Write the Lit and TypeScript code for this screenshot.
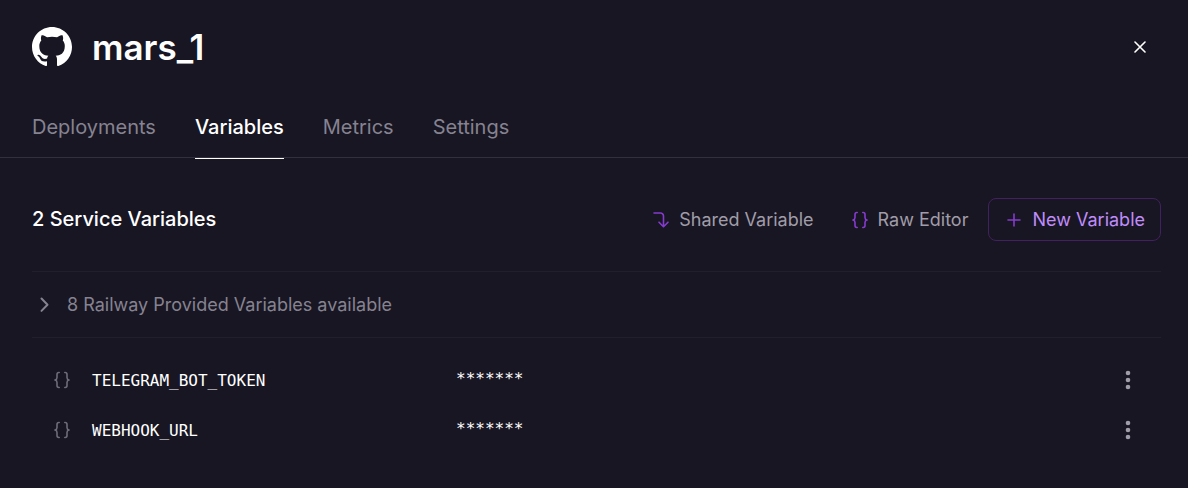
import { LitElement, html, css, svg } from "lit";
import { customElement, state } from "lit/decorators.js";

const braces = svg`
  <path d="M7.200 2.500h-.4c-1.200 0-1.800.7-1.800 1.900v3.100c0 1.400-.7 2.200-2 2.500 1.300.3 2 1.100 2 2.500v3.100c0 1.200.6 1.900 1.800 1.900h.4" />
  <path d="M12.800 2.500h.4c1.200 0 1.800.7 1.800 1.900v3.100c0 1.400.7 2.200 2 2.500-1.300.3-2 1.100-2 2.500v3.100c0 1.200-.6 1.900-1.800 1.900h-.4" />
`;

interface Variable {
  name: string;
  value: string;
}

@customElement("app-root")
export class AppRoot extends LitElement {
  static styles = css`
    :host {
      display: block;
      min-height: 100vh;
      background: #181622;
      color: #ffffff;
      font-family: Inter, sans-serif;
    }
    button {
      font: inherit;
      color: inherit;
      background: none;
      border: 0;
      margin: 0;
      padding: 0;
      cursor: pointer;
    }
    svg {
      display: block;
      flex: none;
    }
    .line-icon {
      fill: none;
      stroke: currentColor;
      stroke-linecap: round;
      stroke-linejoin: round;
      stroke-width: 1.6;
    }
    .header {
      display: flex;
      align-items: center;
      gap: 20px;
      padding: 24px 32px 0;
    }
    .title {
      flex: 1;
      margin: 0;
      font-size: 35px;
      line-height: 46px;
      font-weight: 600;
    }
    .close {
      display: grid;
      place-items: center;
      width: 32px;
      height: 32px;
    }
    .tabs {
      display: flex;
      gap: 39px;
      margin-top: 34px;
      padding: 0 32px;
      border-bottom: 1px solid #33303e;
    }
    .tab {
      color: #868391;
      text-decoration: none;
      font-size: 20px;
      line-height: 46px;
      padding-bottom: 8px;
      border-bottom: 1px solid transparent;
      margin-bottom: -2px;
    }
    .tab.active {
      color: #ffffff;
      font-weight: 500;
      border-color: #ffffff;
    }
    .content {
      padding: 40px 27px 32px 32px;
    }
    .toolbar {
      display: flex;
      align-items: center;
      justify-content: space-between;
      padding-bottom: 30px;
    }
    .heading {
      margin: 0;
      padding-bottom: 2px;
      font-size: 20px;
      line-height: 28px;
      font-weight: 500;
    }
    .actions {
      display: flex;
      gap: 4px;
    }
    .action {
      display: flex;
      align-items: center;
      gap: 8px;
      height: 43px;
      padding: 0 15px;
      border: 1px solid transparent;
      border-radius: 8px;
      font-size: 18px;
      color: #a09da9;
      white-space: nowrap;
    }
    .action svg {
      color: #853bce;
    }
    .action.primary {
      border-color: #41215f;
      color: #c08cfb;
    }
    .provided {
      display: flex;
      align-items: center;
      gap: 13px;
      width: 100%;
      height: 67px;
      padding-left: 2px;
      border-top: 1px solid #211f2b;
      border-bottom: 1px solid #211f2b;
      font-size: 18px;
      color: #868391;
    }
    .variables {
      list-style: none;
      margin: 0;
      padding: 17px 0 0;
    }
    .variable {
      display: grid;
      grid-template-columns: 40px 364px 1fr 26px;
      align-items: center;
      height: 50px;
      padding: 0 20px;
      font-family: "DejaVu Sans Mono", monospace;
      font-size: 16px;
    }
    .variable svg {
      color: #6f6c7a;
    }
    .value {
      padding-bottom: 4px;
    }
    .more {
      display: grid;
      place-items: center;
      height: 32px;
    }
    .more svg {
      fill: #a09da9;
    }
  `;

  @state() private activeTab = "Variables";

  private tabs = ["Deployments", "Variables", "Metrics", "Settings"];

  private variables: Variable[] = [
    { name: "TELEGRAM_BOT_TOKEN", value: "*******" },
    { name: "WEBHOOK_URL", value: "*******" },
  ];

  private selectTab(event: Event, tab: string) {
    event.preventDefault();
    this.activeTab = tab;
  }

  render() {
    return html`
      <header class="header">
        <svg width="40" height="40" viewBox="0 0 16 16" fill="currentColor" aria-hidden="true">
          <path
            d="M8 0C3.580 0 0 3.580 0 8c0 3.540 2.290 6.530 5.470 7.590.4.070.55-.17.55-.38 0-.19-.01-.82-.01-1.490-2.010.37-2.530-.49-2.690-.94-.09-.23-.48-.94-.82-1.130-.28-.15-.68-.52-.01-.53.63-.01 1.080.58 1.230.82.72 1.210 1.870.87 2.330.66.07-.52.28-.87.51-1.070-1.780-.2-3.640-.89-3.640-3.950 0-.87.31-1.590.82-2.150-.08-.2-.36-1.020.08-2.120 0 0 .67-.21 2.200.82.64-.18 1.320-.27 2-.27s1.360.09 2 .27c1.530-1.040 2.200-.82 2.200-.82.44 1.100.16 1.920.08 2.120.51.56.82 1.270.82 2.150 0 3.070-1.870 3.750-3.650 3.950.29.25.54.73.54 1.480 0 1.070-.01 1.930-.01 2.200 0 .21.15.46.55.38A8.010 8.010 0 0 0 16 8c0-4.420-3.580-8-8-8z"
          />
        </svg>
        <h1 class="title">mars_1</h1>
        <button class="close" type="button" aria-label="Close">
          <svg class="line-icon" width="12" height="12" viewBox="0 0 12 12">
            <path d="M1 1l10 10M11 1L1 11" />
          </svg>
        </button>
      </header>
      <nav class="tabs">
        ${this.tabs.map(
          (tab) => html`<a
            class="tab ${tab === this.activeTab ? "active" : ""}"
            href="#${tab.toLowerCase()}"
            @click=${(event: Event) => this.selectTab(event, tab)}
            >${tab}</a
          >`
        )}
      </nav>
      <main class="content">
        <div class="toolbar">
          <h2 class="heading">${this.variables.length} Service Variables</h2>
          <div class="actions">
            <button class="action" type="button">
              <svg class="line-icon" width="20" height="20" viewBox="0 0 20 20">
                <path d="M3 3h6.500a3 3 0 0 1 3 3v10.500M8 12.200l4.500 4.500 4.500-4.500" />
              </svg>
              Shared Variable
            </button>
            <button class="action" type="button">
              <svg class="line-icon" width="20" height="20" viewBox="0 0 20 20">${braces}</svg>
              Raw Editor
            </button>
            <button class="action primary" type="button">
              <svg class="line-icon" width="20" height="20" viewBox="0 0 20 20">
                <path d="M10 4v12M4 10h12" />
              </svg>
              New Variable
            </button>
          </div>
        </div>
        <button class="provided" type="button">
          <svg class="line-icon" width="20" height="20" viewBox="0 0 20 20">
            <path stroke-width="2" d="M7.500 3.500l6 6.200-6 6.200" />
          </svg>
          8 Railway Provided Variables available
        </button>
        <ul class="variables">
          ${this.variables.map(
            (variable) => html`<li class="variable">
              <svg class="line-icon" width="20" height="20" viewBox="0 0 20 20">${braces}</svg>
              <span>${variable.name}</span>
              <span class="value">${variable.value}</span>
              <button class="more" type="button" aria-label="Options for ${variable.name}">
                <svg width="6" height="20" viewBox="0 0 6 20">
                  <circle cx="3" cy="3" r="2.300" />
                  <circle cx="3" cy="10" r="2.300" />
                  <circle cx="3" cy="17" r="2.300" />
                </svg>
              </button>
            </li>`
          )}
        </ul>
      </main>
    `;
  }
}
